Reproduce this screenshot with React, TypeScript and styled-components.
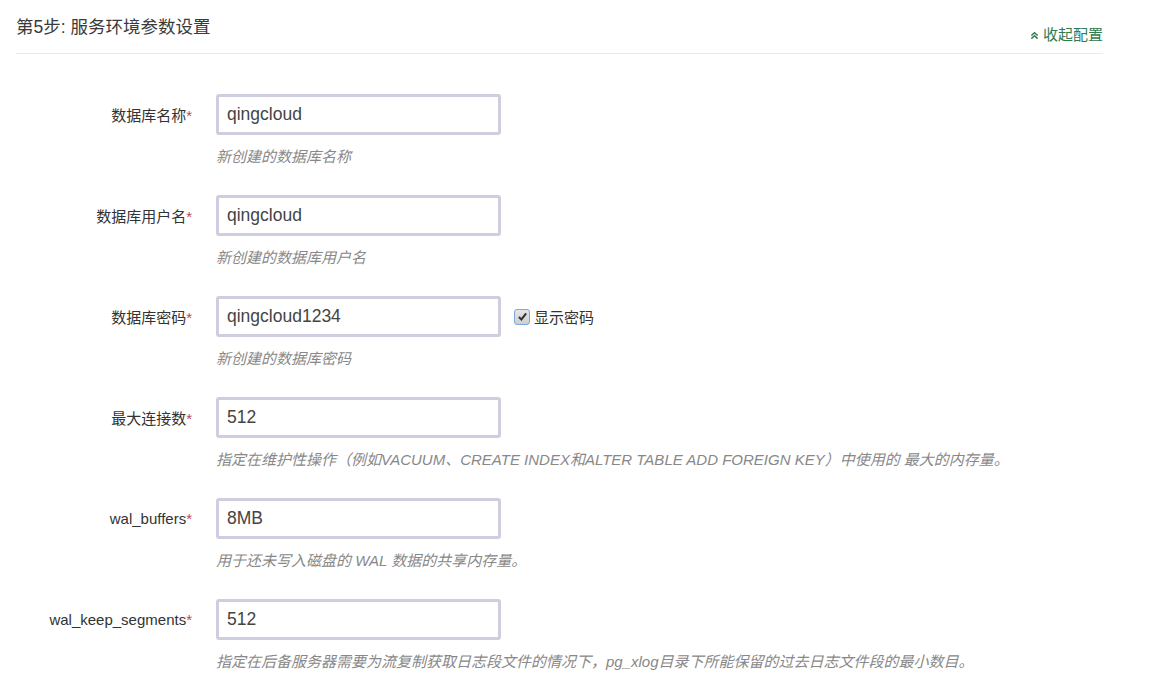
import React from "react";
import styled, { createGlobalStyle } from "styled-components";

const Global = createGlobalStyle`
  html, body { margin: 0; padding: 0; background: #fff; }
  body { font-family: "Liberation Sans", Arial, "Noto Sans CJK SC", sans-serif; color: #333; }
  * { box-sizing: border-box; }
`;

const Panel = styled.div`
  width: 1103px;
  padding-left: 16px;
`;

const Header = styled.div`
  display: flex;
  justify-content: space-between;
  align-items: flex-end;
  height: 54px;
  padding: 14px 0 8px;
  border-bottom: 1px solid #ebebeb;
`;

const Title = styled.h3`
  align-self: flex-start;
  margin: 0;
  font-size: 17.5px;
  font-weight: normal;
  line-height: 26px;
  color: #3a3a3a;
`;

const Toggle = styled.a`
  display: flex;
  align-items: center;
  gap: 4px;
  font-size: 15px;
  line-height: 20px;
  color: #2f7a4f;
  text-decoration: none;
  cursor: pointer;
`;

const Form = styled.div`
  padding-top: 40px;
`;

const Row = styled.div`
  display: grid;
  grid-template-columns: 176px 285px auto;
  column-gap: 24px;
  align-items: center;
  margin-bottom: 28px;
`;

const Label = styled.label`
  text-align: right;
  font-size: 15px;
  color: #333;
`;

const Required = styled.span`
  color: #b5495a;
`;

const Input = styled.input`
  width: 285px;
  height: 41px;
  border: 3px solid #cfcde0;
  border-radius: 3px;
  padding: 0 8px;
  font-family: inherit;
  font-size: 17.5px;
  color: #444;
  outline: none;
`;

const Help = styled.div`
  grid-column: 2 / 4;
  margin-top: 12px;
  font-size: 15px;
  line-height: 20px;
  font-style: italic;
  color: #888;
  white-space: nowrap;
`;

const CheckWrap = styled.label`
  display: flex;
  align-items: center;
  gap: 4px;
  margin-left: -11px;
  font-size: 15px;
  color: #333;
`;

const Box = styled.span`
  width: 16px;
  height: 16px;
  border: 1px solid #7aa7e0;
  border-radius: 3px;
  background: linear-gradient(#e6e6e6, #cfcfcf);
  display: flex;
  align-items: center;
  justify-content: center;
`;

type Field = {
  label: string;
  value: string;
  help: string;
  check?: boolean;
};

const fields: Field[] = [
  { label: "数据库名称", value: "qingcloud", help: "新创建的数据库名称" },
  { label: "数据库用户名", value: "qingcloud", help: "新创建的数据库用户名" },
  { label: "数据库密码", value: "qingcloud1234", help: "新创建的数据库密码", check: true },
  {
    label: "最大连接数",
    value: "512",
    help: "指定在维护性操作（例如VACUUM、CREATE INDEX和ALTER TABLE ADD FOREIGN KEY）中使用的 最大的内存量。",
  },
  { label: "wal_buffers", value: "8MB", help: "用于还未写入磁盘的 WAL 数据的共享内存量。" },
  {
    label: "wal_keep_segments",
    value: "512",
    help: "指定在后备服务器需要为流复制获取日志段文件的情况下，pg_xlog目录下所能保留的过去日志文件段的最小数目。",
  },
];

export default function App() {
  return (
    <Panel>
      <Global />
      <Header>
        <Title>第5步: 服务环境参数设置</Title>
        <Toggle>
          <svg width="9" height="9" viewBox="0 0 10 10" fill="none" stroke="#2f7a4f" strokeWidth="1.6">
            <path d="M1.5 5 L5 1.8 L8.5 5" />
            <path d="M1.5 8.5 L5 5.3 L8.5 8.5" />
          </svg>
          收起配置
        </Toggle>
      </Header>
      <Form>
        {fields.map((f) => (
          <Row key={f.label}>
            <Label>
              {f.label}
              <Required>*</Required>
            </Label>
            <Input defaultValue={f.value} readOnly />
            {f.check ? (
              <CheckWrap>
                <Box>
                  <svg width="11" height="11" viewBox="0 0 12 12">
                    <path d="M2 6.5 L4.8 9.2 L10 2.5" fill="none" stroke="#333" strokeWidth="2.2" />
                  </svg>
                </Box>
                显示密码
              </CheckWrap>
            ) : (
              <span />
            )}
            <Help>{f.help}</Help>
          </Row>
        ))}
      </Form>
    </Panel>
  );
}
